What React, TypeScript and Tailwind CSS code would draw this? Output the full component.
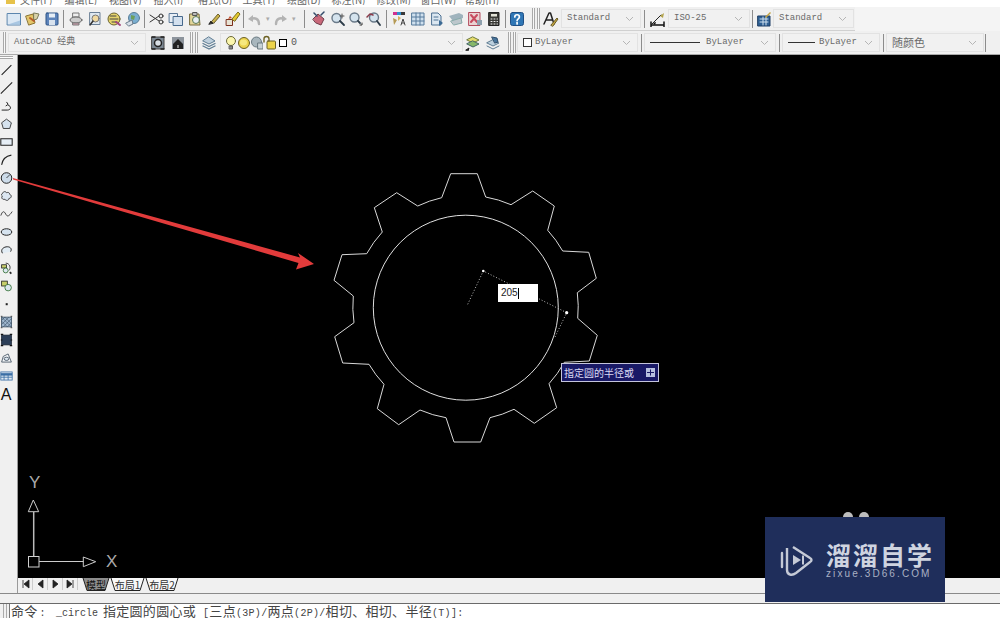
import type { ReactNode } from "react";

const mono = "font-['Liberation_Mono','Noto_Sans_CJK_SC',monospace]";
const cjk = "font-['Noto_Sans_CJK_SC','Liberation_Sans',sans-serif]";

function Ico({ children, w = 16 }: { children: ReactNode; w?: number }) {
  return (
    <svg width={w} height="16" viewBox={`0 0 ${w} 16`} fill="none" strokeLinejoin="round" strokeLinecap="round">
      {children}
    </svg>
  );
}

// top toolbar drawings
const icons: Record<string, ReactNode> = {
  newdoc: <><rect x="1.500" y="2.500" width="13" height="11.500" fill="#dbe8f4" stroke="#5c86ae" /><path d="M2 13.500h12v-4z" fill="#a9c7e2" /></>,
  open: <><path d="M1 5l7-2 2 9-6 2z" fill="#e3c66a" stroke="#8a7330" /><path d="M9 2l5 1-2 5-3 1z" fill="#d9d2a8" stroke="#7b7b5a" /><path d="M5 7l4 3" stroke="#b55c2c" strokeWidth="2" /></>,
  save: <><rect x="2" y="2" width="12" height="12" rx="1" fill="#5d84bb" stroke="#2f5587" /><rect x="5" y="2.500" width="6" height="4" fill="#e6eef6" /><rect x="5" y="9" width="6" height="5" fill="#d8e2ee" /></>,
  print: <><path d="M5 2h6v4H5z" fill="#eee" stroke="#777" /><ellipse cx="8" cy="9" rx="6" ry="3" fill="#ccc" stroke="#666" /><path d="M5 12h6v2H5z" fill="#d9a5b5" stroke="#777" /></>,
  preview: <><rect x="3" y="1.500" width="10" height="12" fill="#dfe8f0" stroke="#6a7f96" /><circle cx="8.500" cy="7.500" r="3.500" fill="#f1d9a0" stroke="#777" /><path d="M6 10l-3 4" stroke="#333" strokeWidth="1.500" /></>,
  plot: <><circle cx="8" cy="8" r="6" fill="#e5d36b" stroke="#6b6330" /><path d="M4 5h6M4 8h8M6 11h5" stroke="#444" /><path d="M10 11l4 3" stroke="#a3477c" strokeWidth="2" /></>,
  publish: <><circle cx="9" cy="7" r="5.500" fill="#7aaed0" stroke="#5a7f98" /><path d="M6 4l4 1-1 4-3-1z" fill="#6d9f5a" /><path d="M1 12l6-3 1 4-4 2z" fill="#d6dfe8" stroke="#66798a" /></>,
  cut: <><path d="M1 4l9 6M1 11l9-6" stroke="#333" /><circle cx="12" cy="5" r="2" stroke="#333" /><circle cx="12" cy="11" r="2" stroke="#333" /></>,
  copy: <><rect x="1.500" y="2.500" width="8" height="9" fill="#e8eef5" stroke="#5a7797" /><rect x="5.500" y="5.500" width="9" height="9" fill="#d3e0ee" stroke="#46688c" /></>,
  paste: <><path d="M3 3h9l1 11H3z" fill="#e3d69a" stroke="#74693a" /><rect x="6" y="1.500" width="4" height="3" fill="#bbb" stroke="#555" /><circle cx="9" cy="9" r="3.500" fill="#e7eef3" stroke="#5a7a55" /></>,
  brush: <><path d="M3 13l2-3 2 2z" fill="#222" stroke="#222" /><path d="M6 10l6-7 2 2-6 7z" fill="#c9b24b" stroke="#6b5e2a" /></>,
  match: <><rect x="1.500" y="8.500" width="6" height="6" fill="#e8e3d4" stroke="#7c2f1c" /><path d="M7 8l6-7 2 2-5 7z" fill="#e3c92f" stroke="#7c6d1a" /><path d="M3 8l2-3 2 2" fill="#c9512c" /></>,
  undo: <><path d="M13 13c0-5-4-7-8-5" stroke="#b3b3b3" strokeWidth="2.400" /><path d="M2 8l5-4v7z" fill="#b3b3b3" /></>,
  redo: <><path d="M3 13c0-5 4-7 8-5" stroke="#b3b3b3" strokeWidth="2.400" /><path d="M14 8l-5-4v7z" fill="#b3b3b3" /></>,
  pan: <><path d="M2 8l5-5 6 5-3 6-5-2z" fill="#c9687a" stroke="#6e3d4a" /><path d="M3 2l3 3M13 1l-3 3" stroke="#344c6a" strokeWidth="1.500" /></>,
  zoomrt: <><circle cx="6.500" cy="7" r="4.500" fill="#d4e3ee" stroke="#6a7a89" strokeWidth="1.400" /><path d="M10 10l4 4" stroke="#2e3d4a" strokeWidth="1.800" /><path d="M12 3v4M10 5h4" stroke="#555" /></>,
  zoomwin: <><circle cx="6.500" cy="6.500" r="4.500" fill="#d4e3ee" stroke="#6a7a89" strokeWidth="1.400" /><path d="M10 10l2 2" stroke="#2e3d4a" strokeWidth="1.800" /><path d="M12 14h2v-2" stroke="#333" /></>,
  zoomprev: <><circle cx="8" cy="6.500" r="4.500" fill="#d4e3ee" stroke="#6a7a89" strokeWidth="1.400" /><path d="M11 10l3 4" stroke="#2e3d4a" strokeWidth="1.800" /><path d="M1 6l3-3 3 1" stroke="#8a3b4a" strokeWidth="1.500" /></>,
  props: <><rect x="2" y="1" width="4" height="3" fill="#d0318f" /><rect x="6" y="1" width="4" height="3" fill="#2f8fd0" /><rect x="10" y="1" width="4" height="3" fill="#3a3a3a" /><path d="M2 7l4 2-3 5z" fill="#b59a54" /><path d="M7 5l3 2-3 3z" fill="#d6b45a" /><path d="M10 14l2-6 2 6M11 12h2" stroke="#444" /></>,
  design: <><rect x="2" y="2" width="12" height="12" fill="#cfe0ee" stroke="#567b9c" /><path d="M2 6h12M2 10h12M6 2v12M10 2v12" stroke="#567b9c" /></>,
  tool: <><path d="M3 2h6l3 3v9H3z" fill="#dbe7f1" stroke="#4d7092" /><path d="M5 6h4M5 9h4" stroke="#4d7092" /><path d="M10 9l4 3-4 3z" fill="#3b6a95" /></>,
  sheet: <><path d="M1 5l10-3 4 2v3L5 10z" fill="#9fb3bd" /><path d="M3 10l10-3 1 5-8 2z" fill="#bcc7cc" stroke="#8aa" /></>,
  markup: <><rect x="2" y="1.500" width="11" height="13" fill="#ead2d2" stroke="#b34a5c" /><path d="M4 4l6 7M10 4l-6 7" stroke="#c84a5e" strokeWidth="2" /><rect x="10" y="9" width="5" height="5" fill="#8ea0ad" /></>,
  calc: <><rect x="3" y="1.500" width="10" height="13" fill="#3a3a36" stroke="#222" /><rect x="5" y="3" width="6" height="2.500" fill="#e3e3d8" /><path d="M5 8h1M8 8h1M11 8h.5M5 10.500h1M8 10.500h1M11 10.500h.5M5 13h1M8 13h1M11 13h.5" stroke="#eee" /></>,
  help: <><rect x="1.500" y="1.500" width="13" height="13" rx="2" fill="#2f76b5" stroke="#1f4f85" /><path d="M5.800 6c0-3 4.600-3 4.600 0 0 1.800-2.300 1.800-2.300 3.600" stroke="#fff" strokeWidth="1.700" /><path d="M8.100 11.500v1.500" stroke="#fff" strokeWidth="1.700" /></>,
  astyle: <><path d="M1 13L6 2h1.500L11 13M3 9h6" stroke="#222" strokeWidth="1.500" /><path d="M8 14l6-7 1 1-5 7z" fill="#c9a93f" stroke="#6b5e2a" /></>,
  dim: <><path d="M2 13l9-9" stroke="#222" /><path d="M1 14h13M1 11v5M14 11v5" stroke="#111" strokeWidth="1.500" /><path d="M10 5l4-3-1 5z" fill="#b3a34a" /><path d="M3 12l3-1-1 3z" fill="#111" /></>,
  table: <><rect x="2" y="5" width="12" height="10" fill="#2e5f92" stroke="#1f3f66" /><path d="M4 8h8M4 11h8M7 6v8M10 6v8" stroke="#cfe0ee" /><path d="M9 6l5-5 1 1-5 5z" fill="#c2a13e" /></>,
  wsset: <><rect x="2" y="2" width="12" height="12" fill="#7c8893" stroke="#444" /><circle cx="8" cy="8" r="3.500" fill="#d8dee4" stroke="#222" strokeWidth="1.500" /><path d="M2 2h3M11 2h3M2 14h3M11 14h3" stroke="#222" strokeWidth="1.500" /></>,
  lock: <><rect x="2" y="2" width="12" height="12" fill="#8d949c" /><path d="M3 9l5-5 5 5v5H3z" fill="#222" /><rect x="7" y="10" width="2" height="3" fill="#888" /></>,
  layers: <><path d="M8 2l6 4-6 3-6-3z" fill="#bfd0dd" stroke="#5f7d93" /><path d="M2 8.500l6 3 6-3M2 11l6 3 6-3" stroke="#5f7d93" strokeWidth="1.300" /></>,
  bulb: <><circle cx="7" cy="6" r="4.500" fill="#fbf6ad" stroke="#6d6a3a" /><path d="M5.500 11h3v3h-3z" fill="#888" stroke="#555" /></>,
  sun: <><circle cx="7" cy="8" r="5.500" fill="#ecd34b" stroke="#6d6225" /><ellipse cx="6.500" cy="7.500" rx="3.500" ry="3" fill="#f6e87e" /></>,
  freeze: <><circle cx="6.500" cy="7" r="5" fill="#a8b6bd" stroke="#6a7a82" /><rect x="8" y="8" width="5" height="6" fill="#c8d2d6" stroke="#6a7a82" /></>,
  lockopen: <><rect x="4" y="6" width="8.500" height="8" rx="1" fill="#ecd34b" stroke="#6d6225" /><path d="M1 7V4a2.500 2.500 0 015 0v2" stroke="#6d6225" strokeWidth="1.400" /></>,
  lyrcur: <><path d="M8 2l6 3-6 3-6-3z" fill="#e6dc6b" stroke="#6e7a3a" /><path d="M8 6l6 3-6 3-6-3z" fill="#86b86a" stroke="#466" /><path d="M1 15l3-2-1 3z" fill="#222" stroke="#222" /></>,
  lyrprev: <><path d="M8 5l6 3-6 3-6-3z" fill="#bcd0de" stroke="#5f7d93" /><path d="M2 11l6 3 6-3" stroke="#5f7d93" /><path d="M7 2l5 1 1 4-3 1z" fill="#48759c" stroke="#2f4f6d" /></>,
};

function Tool({ name, w = 19 }: { name: string; w?: number }) {
  return <div className="flex h-[18px] shrink-0 items-center justify-center" style={{ width: w }}><Ico>{icons[name]}</Ico></div>;
}

function Sep({ w = 4 }: { w?: number }) {
  return (
    <div className="flex h-[20px] shrink-0 items-center justify-center" style={{ width: w }}>
      <div className="h-[18px] w-px bg-[#8c8c8c]" />
    </div>
  );
}

function Grip() {
  return <div className="mx-px h-[21px] w-[3px] shrink-0 border-x border-[#a8a8a8] bg-[#f8f8f8]" />;
}

function Caret() {
  return <span className="w-[10px] shrink-0 text-center text-[7px] leading-none text-[#aaa]">▾</span>;
}

function Chevron() {
  return (
    <svg width="9" height="6" viewBox="0 0 9 6" className="shrink-0" fill="none">
      <path d="M1 1l3.500 3.500L8 1" stroke="#b5b5b5" />
    </svg>
  );
}

function Combo({ w, children, className = "" }: { w: number; children: ReactNode; className?: string }) {
  return (
    <div
      className={`flex h-[19px] shrink-0 items-center gap-1 overflow-hidden border border-[#e2e2e2] bg-[#f1f1f1] pl-[5px] pr-[6px] text-[9px] leading-none text-[#6a6a6a] ${mono} ${className}`}
      style={{ width: w }}
    >
      <div className="flex min-w-0 flex-1 items-center whitespace-nowrap">{children}</div>
      <Chevron />
    </div>
  );
}

const menus = ["文件(F)", "编辑(E)", "视图(V)", "插入(I)", "格式(O)", "工具(T)", "绘图(D)", "标注(N)", "修改(M)", "窗口(W)", "帮助(H)"];

function MenuBar() {
  return (
    <div className={`relative flex h-[5px] shrink-0 items-end overflow-hidden bg-white pl-[20px] text-[10px] leading-none text-[#666] ${cjk}`}>
      <div className="absolute left-[6px] top-0 h-[4px] w-[9px] bg-[#e7c24a]" />
      {menus.map((m) => (
        <span key={m} className="w-[44.5px] shrink-0 whitespace-nowrap">{m}</span>
      ))}
    </div>
  );
}

function TopBar() {
  return (
    <div className="flex h-[24px] w-[855px] shrink-0 items-center border-b border-[#d0d0d0] bg-[#f0f0f0] pl-[4px]">
      <Tool name="newdoc" />
      <Tool name="open" />
      <Tool name="save" />
      <Sep w={5} />
      <Tool name="print" />
      <Tool name="preview" />
      <Tool name="plot" />
      <Tool name="publish" />
      <Sep w={5} />
      <Tool name="cut" />
      <Tool name="copy" />
      <Tool name="paste" />
      <Tool name="brush" />
      <Tool name="match" />
      <Sep w={2} />
      <Tool name="undo" />
      <Caret />
      <Tool name="redo" w={16} />
      <Caret />
      <Sep w={10} />
      <Tool name="pan" />
      <Tool name="zoomrt" />
      <Tool name="zoomwin" w={17} />
      <Tool name="zoomprev" w={20} />
      <Sep w={5} />
      <Tool name="props" />
      <Tool name="design" />
      <Tool name="tool" />
      <Tool name="sheet" />
      <Tool name="markup" />
      <Tool name="calc" />
      <Sep />
      <Tool name="help" w={20} />
      <div className="w-[4px]" />
      <Grip />
      <Grip />
      <Tool name="astyle" w={20} />
      <Combo w={80}>Standard</Combo>
      <Sep w={7} />
      <Tool name="dim" w={20} />
      <Combo w={82}>ISO-25</Combo>
      <Sep w={5} />
      <Tool name="table" w={18} />
      <Combo w={81}>Standard</Combo>
    </div>
  );
}

function LineSwatch({ w }: { w: number }) {
  return <span className="mr-[4px] h-px shrink-0 bg-[#333]" style={{ width: w }} />;
}

function SecondBar() {
  return (
    <div className="flex h-[24px] shrink-0 items-center border-b border-[#a9a9a9] bg-[#f0f0f0] pl-[2px]">
      <Grip />
      <Combo w={138} className="ml-px">AutoCAD 经典</Combo>
      <Tool name="wsset" w={24} />
      <Tool name="lock" w={16} />
      <div className="w-[3px]" />
      <Grip />
      <Grip />
      <Tool name="layers" w={20} />
      <Combo w={243} className="ml-px">
        <div className="-ml-[2px] flex items-center">
          <Ico w={13}>{icons.bulb}</Ico>
          <Ico w={13}>{icons.sun}</Ico>
          <Ico w={13}>{icons.freeze}</Ico>
          <Ico w={13}>{icons.lockopen}</Ico>
          <span className="ml-[3px] mr-[4px] h-[8px] w-[8px] border border-black bg-white" />
          <span className="text-[10px] text-[#555]">0</span>
        </div>
      </Combo>
      <Tool name="lyrcur" w={20} />
      <Tool name="lyrprev" w={20} />
      <div className="w-[4px]" />
      <Grip />
      <Grip />
      <Combo w={121}>
        <span className="mr-[3px] h-[9px] w-[9px] border border-[#333] bg-white" />
        ByLayer
      </Combo>
      <Sep w={6} />
      <Combo w={132}>
        <LineSwatch w={50} />
        <span className="ml-[2px]">ByLayer</span>
      </Combo>
      <Sep w={6} />
      <Combo w={98}>
        <LineSwatch w={27} />
        ByLayer
      </Combo>
      <Sep w={6} />
      <Combo w={98} className={`text-[11px] ${cjk}`}>
        <span className={`text-[11px] ${cjk}`}>随颜色</span>
      </Combo>
      <Sep w={3} />
    </div>
  );
}

const drawTools: ReactNode[] = [
  <path d="M2 14L14 2" stroke="#222" strokeWidth="1.300" />,
  <path d="M1 15L15 1" stroke="#222" strokeWidth="1.300" />,
  <path d="M2 13h7c5 0 5-5 1-6M8 3l2 3-3 2" stroke="#222" strokeWidth="1.200" />,
  <path d="M8 2l6 4.500-2 7H4l-2-7z" fill="#d6e3ef" stroke="#222" />,
  <path d="M1 4h14v8H1z" fill="#e6eef6" stroke="#222" strokeWidth="1.300" />,
  <path d="M2 14C3 7 8 3 14 2" stroke="#222" strokeWidth="1.300" />,
  <><circle cx="8" cy="8" r="6.500" fill="#cddcea" stroke="#222" strokeWidth="1.200" /><path d="M8 8l4-4" stroke="#222" /></>,
  <path d="M3 5c1-3 4-3 5-1 2-1 4 0 4 2 3 1 2 5-1 5 0 3-4 3-5 1-3 1-5-2-3-4-2-1-1-3 0-3z" fill="#dbe6f0" stroke="#222" />,
  <path d="M1 10c2-6 4-6 6-2s4 3 8-3" stroke="#222" />,
  <ellipse cx="8" cy="8" rx="6.500" ry="4" fill="#d6e3ef" stroke="#222" strokeWidth="1.200" />,
  <path d="M3 12C0 7 5 4 9 4s6 3 4 6" fill="#e2ecf4" stroke="#222" strokeWidth="1.200" />,
  <><path d="M7 2c5 0 7 6 4 9" stroke="#222" /><rect x="2" y="4" width="6" height="4" fill="#c7cf6b" stroke="#222" /><circle cx="7" cy="11" r="3" fill="#dbe6f0" stroke="#2a6a2a" /><path d="M12 13l2 2" stroke="#222" strokeWidth="2" /></>,
  <><rect x="2" y="2" width="7" height="6" fill="#c7cf6b" stroke="#222" /><circle cx="10" cy="10" r="4" fill="#dbe6f0" stroke="#2a6a2a" /></>,
  <rect x="7" y="7" width="2.500" height="2.500" fill="#222" />,
  <><rect x="2" y="2" width="12" height="12" fill="#9fb7cf" stroke="#34495e" /><path d="M2 6l4-4M2 11l9-9M4 14L14 4M9 14l5-5M6 2l8 8M2 2l12 12M2 7l7 7" stroke="#34495e" strokeWidth="0.700" /><path d="M1 1h2M13 1h2M1 15h2M13 15h2" stroke="#222" /></>,
  <><rect x="2" y="2" width="12" height="12" fill="#2c3e58" stroke="#1a2433" /><path d="M1 1h3M12 1h3M1 15h3M12 15h3M1 8h2M13 8h2" stroke="#111" strokeWidth="1.500" /></>,
  <><path d="M2 13l2-7 6-3 4 10z" fill="#f5f7fa" stroke="#3a4a5a" /><ellipse cx="8" cy="9" rx="3" ry="2" fill="#dbe6f0" stroke="#3a4a5a" /></>,
  <><rect x="1" y="3" width="14" height="10" fill="#dfe9f3" stroke="#3a6ea5" /><path d="M1 6h14" stroke="#3a6ea5" strokeWidth="3" /><path d="M1 9.500h14M5 6v7M10 6v7" stroke="#3a6ea5" /></>,
];

function LeftBar() {
  return (
    <div className="flex w-[18px] shrink-0 flex-col items-center border-r border-[#9a9a9a] bg-[#f0f0f0] pr-[5px]">
      <div className="mb-[2px] mt-[1px] h-[3px] w-[14px] border-y border-[#a8a8a8] bg-white" />
      {drawTools.map((d, i) => (
        <div key={i} className="flex h-[18px] w-[13px] shrink-0 items-center justify-center">
          <svg width="14" height="14" viewBox="0 0 16 16" fill="none">{d}</svg>
        </div>
      ))}
      <div className="mt-[1px] flex h-[18px] items-center justify-center text-[16px] leading-none text-[#111] font-['Liberation_Sans',sans-serif]">A</div>
    </div>
  );
}

function CadDrawing() {
  return (
    <svg className="absolute left-0 top-0 overflow-visible" width="982" height="524" viewBox="18 54 982 524" fill="none">
      <path
        d="M450.700 172.700H477.300L485.700 196A112 112 0 0 1 511 203.700L532.700 190L554.300 205L547.700 229.300A112 112 0 0 1 562.700 250L588.700 251.300L596.300 277.300L577.300 291.700A112 112 0 0 1 577.700 317.300L597.300 334.300L589.300 360L564.300 361.300A112 112 0 0 1 549 382.700L556.700 406.700L534.300 422.300L514 408.300A112 112 0 0 1 490 416.700L480.700 441H454L446 416.700A112 112 0 0 1 420 409L398.700 423.700L377.300 407.700L384 383.300A112 112 0 0 1 369 363.300L342.700 362L334.700 335.700L354 321.700A112 112 0 0 1 353.300 295L334 279.300L342 253.700L366.700 252.700A112 112 0 0 1 382.300 231L374.300 206.700L396.700 191.700L417.700 205A112 112 0 0 1 441.700 196.700Z"
        stroke="#d8d8d8"
      />
      <circle cx="465.800" cy="306.700" r="92.500" stroke="#e0e0e0" />
      <path d="M467.700 303.300L483.300 270L566.700 311.700L555 336" stroke="#bdbdbd" strokeDasharray="1 2" />
      <circle cx="483.300" cy="270" r="1.300" fill="#fff" />
      <circle cx="566.700" cy="311.700" r="1.600" fill="#fff" />
      {/* UCS icon */}
      <rect x="28.500" y="555.500" width="10.500" height="10.500" stroke="#d0d0d0" />
      <path d="M33.700 555V511" stroke="#bbb" strokeWidth="1.500" />
      <path d="M33.300 499L28.300 510.700H38.700Z" stroke="#ccc" />
      <path d="M39 560.500H83.500" stroke="#ccc" />
      <path d="M83.300 556V565.700L95.700 560.700Z" stroke="#ccc" />
      {/* leader arrow */}
      <path d="M13 177L300 256.500L298 252L314 263L296 268.500L298.500 262L13 178.500Z" fill="#e23b3b" />
    </svg>
  );
}

function Canvas() {
  return (
    <div className="relative flex-1 bg-black">
      <CadDrawing />
      <span className="absolute left-[11px] top-[419px] text-[17px] font-light leading-none text-[#aaa] font-['Liberation_Sans',sans-serif]">Y</span>
      <span className="absolute left-[88px] top-[498px] text-[17px] font-light leading-none text-[#aaa] font-['Liberation_Sans',sans-serif]">X</span>
      <div className="absolute left-[480px] top-[229px] flex h-[18px] w-[40px] items-center bg-white pl-[3px] text-[10px] leading-none text-[#222] font-['Liberation_Sans',sans-serif]">
        205<span className="h-[11px] w-px bg-black" />
      </div>
      <div className={`absolute left-[543px] top-[308px] flex h-[19px] w-[98px] items-center justify-between border border-[#c4c4dc] bg-[#191966] pl-[2px] pr-[3px] text-[10px] leading-none text-[#d9d9f4] ${cjk}`}>
        指定圆的半径或
        <svg width="9" height="9" viewBox="0 0 9 9">
          <rect width="9" height="9" fill="#b8c0e0" />
          <path d="M1 4.500h7M4.500 1.500v6" stroke="#191966" />
        </svg>
      </div>
    </div>
  );
}

function Tab({ w, label, active }: { w: number; label: string; active?: boolean }) {
  return (
    <div className="relative flex h-[13px] shrink-0 items-center justify-center" style={{ width: w }}>
      <svg className="absolute inset-0" width={w} height="13" viewBox={`0 0 ${w} 13`}>
        <path d={`M1 0L5 12.500H${w - 5}L${w - 1} 0`} fill={active ? "#8d8d8d" : "#f8f8f8"} stroke="#222" />
      </svg>
      <span className={`relative text-[10px] leading-none ${active ? "text-[#111]" : "text-[#333]"} ${cjk}`}>{label}</span>
    </div>
  );
}

// first / prev / next / last buttons of the layout tabs
const navPaths = ["M3 1v8M9 1L4 5l5 4z", "M8 1L3 5l5 4z", "M3 1l5 4-5 4z", "M2 1l5 4-5 4zM8 1v8"];

function TabStrip() {
  return (
    <div className="flex h-[15px] shrink-0 items-start bg-[#f0f0f0]">
      <div className="flex h-[12px] w-[64px] shrink-0 items-center">
        {navPaths.map((d) => (
          <span key={d} className="flex h-[12px] w-[15px] items-center justify-center border-r border-[#ccc]">
            <svg width="10" height="10" viewBox="0 0 10 10"><path d={d} fill="#222" stroke="#222" strokeWidth="0.800" /></svg>
          </span>
        ))}
      </div>
      <Tab w={28} label="模型" active />
      <Tab w={35} label="布局1" />
      <Tab w={34} label="布局2" />
    </div>
  );
}

function CommandLine() {
  const zh = `text-[13px] tracking-[0.3px] ${cjk}`;
  const en = "text-[10px] tracking-[0.3px]";
  return (
    <div className="flex h-[25px] shrink-0 flex-col border-t border-[#8a8a8a] bg-[#f0f0f0]">
      <div className="h-[9px] shrink-0" />
      <div className="flex flex-1 border-t border-[#6a6a6a] pl-[3px]">
        <div className="mr-[2px] w-[4px] shrink-0 border-x border-[#aaa]" />
        <div className={`flex h-[14px] flex-1 items-baseline overflow-hidden whitespace-nowrap border-l border-[#777] bg-white pl-px leading-[14px] text-[#444] ${mono}`}>
          <span className={zh}>命令</span>
          <span className={`${en} ml-[2px] mr-[10px]`}>:</span>
          <span className="text-[10px]">_circle</span>
          <span className={`${zh} ml-[5px]`}>指定圆的圆心或</span>
          <span className={`${en} ml-[7px]`}>[</span>
          <span className={zh}>三点</span>
          <span className={en}>(3P)/</span>
          <span className={zh}>两点</span>
          <span className={en}>(2P)/</span>
          <span className={zh}>相切、相切、半径</span>
          <span className={en}>(T)]:</span>
        </div>
      </div>
    </div>
  );
}

function Watermark() {
  return (
    <>
      <div className="absolute left-[843px] top-[512px] h-[10px] w-[10px] rounded-full bg-[#bdbdbd]" />
      <div className="absolute left-[859px] top-[512px] h-[10px] w-[10px] rounded-full bg-[#bdbdbd]" />
      <div className="absolute left-[765px] top-[517px] flex h-[85px] w-[180px] items-center bg-[#1f2e5b] pl-[14px]">
        <svg width="36" height="36" viewBox="0 0 36 36" fill="none" className="shrink-0">
          <path d="M8 6v22c0 5 5 6 9 3l14-11c2-1 2-3 0-4L14 5" stroke="#c5cad6" strokeWidth="2.400" />
          <path d="M3 11v14" stroke="#c5cad6" strokeWidth="2.400" strokeLinecap="round" />
          <path d="M14 13v10l8-5z" fill="#c5cad6" />
          <path d="M24 13.500v9" stroke="#c5cad6" strokeWidth="2" />
        </svg>
        <div className="ml-[11px] flex flex-col">
          <span className={`text-[25px] font-bold leading-[27px] tracking-[2px] text-[#cfd4e0] whitespace-nowrap ${cjk}`}>溜溜自学</span>
          <span className="text-[10px] leading-[11px] tracking-[2.100px] text-[#aab1c4] whitespace-nowrap font-['Liberation_Sans',sans-serif]">zixue.3D66.COM</span>
        </div>
      </div>
    </>
  );
}

export default function App() {
  return (
    <div className="relative flex h-[618px] w-[1000px] flex-col overflow-hidden bg-[#f0f0f0]">
      <MenuBar />
      <div className="h-[2px] shrink-0 bg-white" />
      <div className="shrink-0 bg-[#f4f4f4]">
        <TopBar />
      </div>
      <SecondBar />
      <div className="flex min-h-0 flex-1">
        <LeftBar />
        <div className="flex min-w-0 flex-1 flex-col">
          <Canvas />
          <TabStrip />
        </div>
      </div>
      <CommandLine />
      <Watermark />
    </div>
  );
}
